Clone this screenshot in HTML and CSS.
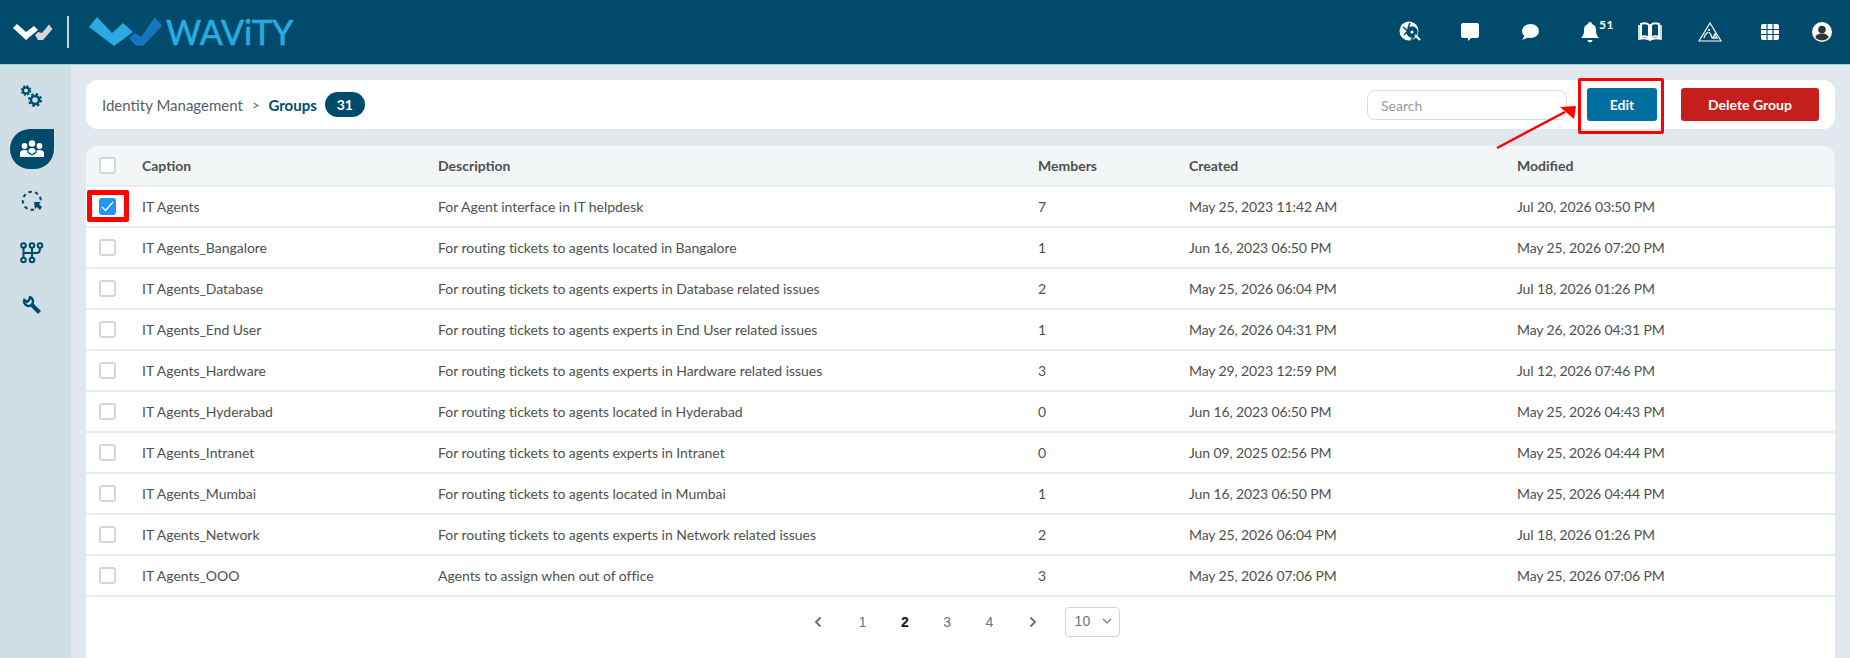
FILE: index.html
```html
<!DOCTYPE html>
<html>
<head>
    <meta name="viewport" content="width=device-width, initial-scale=1">
    <title>Wavity - Groups</title>
    <link rel="stylesheet" href="styles.css">
</head>
<body>

    <header class="topbar">
        <div class="brand">
            <svg class="brand-mark" width="166" height="64" viewBox="0 0 166 64">
                <path d="M13 28l4-4 9 8 8-6 4 4-12 10z" fill="#fff"/>
                <path d="M35 35l3 5h5l9.500-11-3.500-4.500-7 8.500-4-1z" fill="#d6d6d6"/>
                <rect x="67" y="16" width="2" height="32" fill="#c9d2d6"/>
                <path d="M89 27l8-10 15 16 11-10 10 9-19 14z" fill="#29abe2"/>
                <path d="M129 38l6-5 6 4 14-20 7 9-19 20-8-1z" fill="#1476bd"/>
            </svg>
            <span class="brand-name">WAViTY</span>
        </div>
        <nav class="top-icons">
            <span class="top-icon">
                <svg width="22" height="22" viewBox="0 0 22 22">
                    <circle cx="10" cy="10" r="9.500" fill="#fff"/>
                    <path d="M4 6l5 4-4 4M11 2l-2 5M15 16l-3 3" fill="none" stroke="#004b6b" stroke-width="1.600"/>
                    <circle cx="13" cy="11" r="4" fill="#fff" stroke="#004b6b" stroke-width="3.400"/>
                    <circle cx="13" cy="11" r="3.200" fill="#004b6b"/>
                    <circle cx="13" cy="11" r="1.600" fill="#fff"/>
                    <path d="M16 14l5 5" stroke="#fff" stroke-width="2"/>
                </svg>
            </span>
            <span class="top-icon">
                <svg width="20" height="20" viewBox="0 0 20 20">
                    <path d="M3 1h14a2 2 0 0 1 2 2v11a2 2 0 0 1-2 2h-6l-3 3v-3H3a2 2 0 0 1-2-2V3a2 2 0 0 1 2-2z" fill="#fff"/>
                </svg>
            </span>
            <span class="top-icon">
                <svg width="20" height="20" viewBox="0 0 20 20">
                    <ellipse cx="10.500" cy="9" rx="8.500" ry="7" fill="#fff"/>
                    <path d="M5 13l-3 5 7-3z" fill="#fff"/>
                </svg>
            </span>
            <span class="top-icon">
                <svg width="18" height="22" viewBox="0 0 18 22">
                    <path d="M9 1a2 2 0 0 1 2 2c3 1 4 3 4 6 0 4 1 6 3 8H0c2-2 3-4 3-8 0-3 1-5 4-6a2 2 0 0 1 2-2z" fill="#fff"/>
                    <path d="M6.500 19h5a2.500 2.500 0 0 1-5 0z" fill="#fff"/>
                </svg>
                <span class="bell-count">51</span>
            </span>
            <span class="top-icon">
                <svg width="24" height="20" viewBox="0 0 24 20">
                    <path d="M3 2c3-1 6-1 8 1v13c-2-2-5-2-8-1zM21 2c-3-1-6-1-8 1v13c2-2 5-2 8-1z" fill="none" stroke="#fff" stroke-width="2"/>
                    <path d="M1 3v14c4-1 8-1 11 1 3-2 7-2 11-1V3" fill="none" stroke="#fff" stroke-width="1.600"/>
                </svg>
            </span>
            <span class="top-icon">
                <svg width="24" height="20" viewBox="0 0 24 20">
                    <path d="M12 1l11 18H1z" fill="none" stroke="#fff" stroke-width="1.200"/>
                    <circle cx="11" cy="8" r="1.100" fill="#fff"/>
                    <path d="M10 10l-3 3-1 3M11 10l2 3 1 3M15 16l2-4 2 4z" fill="none" stroke="#fff" stroke-width="1.300"/>
                </svg>
            </span>
            <span class="top-icon">
                <svg width="18" height="16" viewBox="0 0 18 16">
                    <rect width="18" height="16" rx="2" fill="#fff"/>
                    <path d="M0 5.500h18M0 10.500h18M6 0v16M12 0v16" stroke="#004b6b" stroke-width="1.200"/>
                </svg>
            </span>
            <span class="top-icon top-icon-last">
                <svg width="20" height="20" viewBox="0 0 20 20">
                    <circle cx="10" cy="10" r="10" fill="#fff"/>
                    <circle cx="10" cy="7.500" r="3.800" fill="#333"/>
                    <path d="M3.500 16c0-3 2.500-4.500 6.500-4.500s6.500 1.500 6.500 4.500a10 10 0 0 1-13 0z" fill="#333"/>
                </svg>
            </span>
        </nav>
    </header>

    <div class="layout">
        <aside class="sidebar">
            <div class="side-item">
                <svg width="24" height="24" viewBox="0 0 24 24" fill="none" stroke="#004b6b">
                    <circle cx="6" cy="5.500" r="3" stroke-width="2"/>
                    <circle cx="6" cy="5.500" r="4.500" stroke-width="1.500" stroke-dasharray="2 1.530"/>
                    <circle cx="15" cy="15" r="4" stroke-width="2.400"/>
                    <circle cx="15" cy="15" r="6" stroke-width="2" stroke-dasharray="2.500 2.210"/>
                </svg>
            </div>
            <div class="side-item">
                <span class="side-drop">
                    <svg width="24" height="18" viewBox="0 0 24 18" fill="#fff">
                        <circle cx="4.500" cy="6" r="2.900"/>
                        <circle cx="19.500" cy="6" r="2.900"/>
                        <circle cx="12" cy="3.500" r="3.200"/>
                        <path d="M0 17v-4c0-2 2-3 4.500-3 1.500 0 2.500.3 3 1v2l4.500 2.500 4.500-2.500v-2c.5-.7 1.500-1 3-1 2.500 0 4.500 1 4.500 3v4z"/>
                        <path d="M8.500 11c0-2 1.500-3 3.500-3s3.500 1 3.500 3v1L12 14l-3.500-2z"/>
                    </svg>
                </span>
            </div>
            <div class="side-item">
                <svg width="22" height="22" viewBox="0 0 22 22" fill="none" stroke="#004b6b">
                    <path d="M13 19.500A9 9 0 1 1 19.500 13" stroke-width="2" stroke-dasharray="3.500 3.200"/>
                    <path d="M13 12h7l-2 2 3 3-2 3-3-3-2 2z" fill="#004b6b" stroke="none"/>
                </svg>
            </div>
            <div class="side-item">
                <svg width="24" height="22" viewBox="0 0 24 22" fill="none" stroke="#004b6b" stroke-width="2">
                    <circle cx="3.500" cy="3.500" r="2.300"/>
                    <circle cx="12" cy="3.500" r="2.300"/>
                    <circle cx="20" cy="3.500" r="2.300"/>
                    <circle cx="3.500" cy="18" r="2.300"/>
                    <circle cx="12" cy="18" r="2.300"/>
                    <path d="M3.500 6v10M12 6v10M20 6c0 4-1 5-3 5H3.500"/>
                </svg>
            </div>
            <div class="side-item">
                <svg width="20" height="20" viewBox="0 0 20 20" fill="none" stroke="#004b6b">
                    <path d="M2.300 4.900A4.500 4.500 0 1 0 8 2.200L7 5 5 7z" stroke-width="2.400"/>
                    <path d="M10 10l7.500 7.500" stroke-width="4"/>
                </svg>
            </div>
        </aside>

        <main class="content">
            <section class="crumbs">
                <span class="crumb-link">Identity Management</span>
                <span class="crumb-sep">&gt;</span>
                <span class="crumb-current">Groups</span>
                <span class="crumb-count">31</span>
                <input class="search" type="text" placeholder="Search">
                <button type="button" class="btn btn-edit">Edit</button>
                <button type="button" class="btn btn-delete">Delete Group</button>
            </section>

            <section class="table-card">
                <table class="groups">
                    <thead>
                        <tr>
                            <th class="col-check"><span class="check"></span></th>
                            <th class="col-caption">Caption</th>
                            <th class="col-desc">Description</th>
                            <th class="col-members">Members</th>
                            <th class="col-created">Created</th>
                            <th>Modified</th>
                        </tr>
                    </thead>
                    <tbody>
                        <tr>
                            <td><span class="check check-on"><svg width="13" height="11" viewBox="0 0 13 11"><path d="M1 6l3.500 3.500L12 1" fill="none" stroke="#fff" stroke-width="1.200"/></svg></span></td>
                            <td>IT Agents</td>
                            <td>For Agent interface in IT helpdesk</td>
                            <td>7</td>
                            <td>May 25, 2023 11:42 AM</td>
                            <td>Jul 20, 2026 03:50 PM</td>
                        </tr>
                        <tr>
                            <td><span class="check"></span></td>
                            <td>IT Agents_Bangalore</td>
                            <td>For routing tickets to agents located in Bangalore</td>
                            <td>1</td>
                            <td>Jun 16, 2023 06:50 PM</td>
                            <td>May 25, 2026 07:20 PM</td>
                        </tr>
                        <tr>
                            <td><span class="check"></span></td>
                            <td>IT Agents_Database</td>
                            <td>For routing tickets to agents experts in Database related issues</td>
                            <td>2</td>
                            <td>May 25, 2026 06:04 PM</td>
                            <td>Jul 18, 2026 01:26 PM</td>
                        </tr>
                        <tr>
                            <td><span class="check"></span></td>
                            <td>IT Agents_End User</td>
                            <td>For routing tickets to agents experts in End User related issues</td>
                            <td>1</td>
                            <td>May 26, 2026 04:31 PM</td>
                            <td>May 26, 2026 04:31 PM</td>
                        </tr>
                        <tr>
                            <td><span class="check"></span></td>
                            <td>IT Agents_Hardware</td>
                            <td>For routing tickets to agents experts in Hardware related issues</td>
                            <td>3</td>
                            <td>May 29, 2023 12:59 PM</td>
                            <td>Jul 12, 2026 07:46 PM</td>
                        </tr>
                        <tr>
                            <td><span class="check"></span></td>
                            <td>IT Agents_Hyderabad</td>
                            <td>For routing tickets to agents located in Hyderabad</td>
                            <td>0</td>
                            <td>Jun 16, 2023 06:50 PM</td>
                            <td>May 25, 2026 04:43 PM</td>
                        </tr>
                        <tr>
                            <td><span class="check"></span></td>
                            <td>IT Agents_Intranet</td>
                            <td>For routing tickets to agents experts in Intranet</td>
                            <td>0</td>
                            <td>Jun 09, 2025 02:56 PM</td>
                            <td>May 25, 2026 04:44 PM</td>
                        </tr>
                        <tr>
                            <td><span class="check"></span></td>
                            <td>IT Agents_Mumbai</td>
                            <td>For routing tickets to agents located in Mumbai</td>
                            <td>1</td>
                            <td>Jun 16, 2023 06:50 PM</td>
                            <td>May 25, 2026 04:44 PM</td>
                        </tr>
                        <tr>
                            <td><span class="check"></span></td>
                            <td>IT Agents_Network</td>
                            <td>For routing tickets to agents experts in Network related issues</td>
                            <td>2</td>
                            <td>May 25, 2026 06:04 PM</td>
                            <td>Jul 18, 2026 01:26 PM</td>
                        </tr>
                        <tr>
                            <td><span class="check"></span></td>
                            <td>IT Agents_OOO</td>
                            <td>Agents to assign when out of office</td>
                            <td>3</td>
                            <td>May 25, 2026 07:06 PM</td>
                            <td>May 25, 2026 07:06 PM</td>
                        </tr>
                    </tbody>
                </table>

                <div class="pager">
                    <span class="pager-arrow pager-prev">
                        <svg width="8" height="12" viewBox="0 0 8 12"><path d="M6.500 1.500L2 6l4.500 4.500" fill="none" stroke="#6b7280" stroke-width="2"/></svg>
                    </span>
                    <span class="pager-num">1</span>
                    <span class="pager-num pager-on">2</span>
                    <span class="pager-num">3</span>
                    <span class="pager-num">4</span>
                    <span class="pager-arrow">
                        <svg width="8" height="12" viewBox="0 0 8 12"><path d="M1.500 1.500L6 6l-4.500 4.500" fill="none" stroke="#6b7280" stroke-width="2"/></svg>
                    </span>
                    <span class="pager-size">
                        10
                        <svg width="10" height="6" viewBox="0 0 10 6"><path d="M1 1l4 4 4-4" fill="none" stroke="#6b7280" stroke-width="1.200"/></svg>
                    </span>
                </div>
            </section>
        </main>
    </div>

    <!-- red markup drawn over the screenshot -->
    <span class="mark-check"></span>
    <span class="mark-edit"></span>
    <svg class="mark-arrow" width="90" height="50" viewBox="0 0 90 50">
        <path d="M3 46L71 10" stroke="#f00" stroke-width="2.500" fill="none"/>
        <path d="M82 4L80 17 66 5z" fill="#f00"/>
    </svg>

</body>
</html>
```

FILE: styles.css
```css
html, body {
    height: 100%;
}

body {
    margin: 0;
    overflow: hidden;
    display: flex;
    flex-direction: column;
    font-family: Lato, "Open Sans", sans-serif;
    font-size: 14px;
    color: #4f4f4f;
    background-color: #e1e9ef;
}

.topbar {
    height: 65px;
    flex: none;
    display: flex;
    align-items: center;
    justify-content: space-between;
    box-sizing: border-box;
    background-color: #004b6b;
    border-bottom: 1px solid #9fd0de;
}

.brand {
    display: flex;
    align-items: center;
}

.brand-mark {
    display: block;
}

.brand-name {
    font-size: 34px;
    line-height: 40px;
    color: #29abe2;
    -webkit-text-stroke: 0.6px #29abe2;
}

.top-icons {
    display: flex;
    align-items: center;
    padding-right: 6px;
}

.top-icon {
    position: relative;
    width: 60px;
    display: flex;
    justify-content: center;
}

.top-icon-last {
    width: 44px;
}

.bell-count {
    position: absolute;
    left: 39px;
    top: -4px;
    font-size: 12px;
    font-weight: 700;
    color: #fff;
    letter-spacing: 0.5px;
}

.layout {
    flex: 1;
    display: flex;
    min-height: 0;
}

.sidebar {
    width: 71px;
    flex: none;
    padding-top: 6px;
    background-color: #cfdfe5;
}

.side-item {
    height: 52px;
    width: 64px;
    display: flex;
    align-items: center;
    justify-content: center;
}

.side-drop {
    width: 44px;
    height: 40px;
    display: flex;
    align-items: center;
    justify-content: center;
    background-color: #004b6b;
    border-radius: 22px 0 22px 22px;
}

.content {
    flex: 1;
    min-width: 0;
    display: flex;
    flex-direction: column;
    gap: 17px;
    padding: 15px 15px 0 15px;
}

.crumbs {
    height: 49px;
    flex: none;
    display: flex;
    align-items: center;
    padding: 0 16px;
    background-color: #fff;
    border-radius: 12px;
}

.crumb-link {
    font-size: 15px;
    color: #56606b;
}

.crumb-sep {
    margin: 0 9px;
    font-size: 13px;
    color: #56606b;
}

.crumb-current {
    font-size: 15px;
    font-weight: 700;
    color: #004b6b;
}

.crumb-count {
    width: 40px;
    height: 25px;
    margin-left: 8px;
    line-height: 25px;
    text-align: center;
    font-weight: 700;
    color: #fff;
    background-color: #004b6b;
    border-radius: 13px;
}

.search {
    width: 172px;
    height: 27px;
    margin-left: auto;
    padding: 1px 13px 0 13px;
    font-family: Lato, sans-serif;
    font-size: 14px;
    border: 1px solid #d9dde1;
    border-radius: 8px;
}

.search::placeholder {
    color: #9a9a9a;
}

.btn {
    height: 33px;
    margin-left: 20px;
    padding: 0;
    border: none;
    border-radius: 3px;
    font-family: Lato, sans-serif;
    font-size: 14px;
    font-weight: 700;
    color: #fff;
}

.btn-edit {
    width: 70px;
    background-color: #006e9e;
}

.btn-delete {
    width: 138px;
    margin-left: 24px;
    background-color: #c41f1c;
}

.table-card {
    flex: 1;
    background-color: #fff;
    border-radius: 12px 12px 0 0;
    overflow: hidden;
}

.groups {
    width: 100%;
    table-layout: fixed;
    border-collapse: collapse;
}

.groups th {
    height: 39px;
    padding: 0;
    text-align: left;
    font-weight: 700;
    color: #4f4f4f;
    background-color: #f3f6f7;
    border-bottom: 2px solid #e8edf0;
}

.groups td {
    height: 39px;
    padding: 0;
    letter-spacing: -0.03px;
    border-bottom: 2px solid #e8edf0;
}

.groups td:nth-child(n+5) {
    letter-spacing: -0.12px;
}

.col-check {
    width: 56px;
}

.col-caption {
    width: 296px;
}

.col-desc {
    width: 600px;
}

.col-members {
    width: 151px;
}

.col-created {
    width: 328px;
}

.check {
    display: flex;
    align-items: center;
    justify-content: center;
    box-sizing: border-box;
    width: 17px;
    height: 17px;
    margin-left: 13px;
    background-color: #fff;
    border: 2px solid #d3d7dd;
    border-radius: 3px;
}

.check-on {
    background-color: #2196f3;
    border-color: #2196f3;
}

.pager {
    display: flex;
    align-items: center;
    justify-content: center;
    height: 50px;
    padding-right: 7px;
    font-family: "Liberation Sans", Arial, sans-serif;
    color: #6b7280;
}

.pager-arrow {
    width: 44px;
    display: flex;
    justify-content: center;
}

.pager-prev {
    width: 47px;
}

.pager-num {
    width: 42.300px;
    text-align: center;
}

.pager-on {
    font-weight: 700;
    color: #111;
}

.pager-size {
    display: flex;
    align-items: center;
    justify-content: space-between;
    box-sizing: border-box;
    width: 55px;
    height: 30px;
    margin-left: 10px;
    padding: 0 7px 2px 9px;
    border: 1px solid #d1d5db;
    border-radius: 4px;
}

/* annotations */
.mark-check {
    position: absolute;
    left: 87px;
    top: 190px;
    width: 42px;
    height: 32px;
    box-sizing: border-box;
    border: 5px solid #f00;
    border-radius: 2px;
}

.mark-edit {
    position: absolute;
    left: 1578px;
    top: 78px;
    width: 86px;
    height: 56px;
    box-sizing: border-box;
    border: 3px solid #f00;
    border-radius: 2px;
}

.mark-arrow {
    position: absolute;
    left: 1494px;
    top: 102px;
}
```
